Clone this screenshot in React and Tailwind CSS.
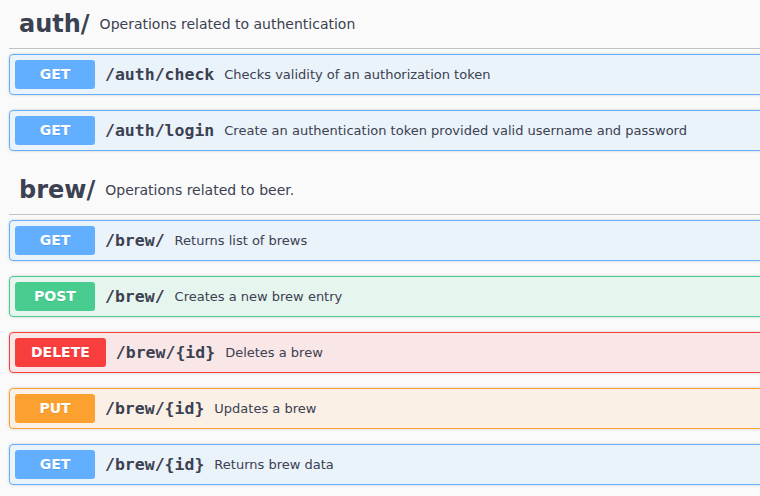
const sans = { fontFamily: '"DejaVu Sans", sans-serif' };

const METHODS = {
  get: { badge: 'bg-[#61affe]', block: 'bg-[#61affe]/10 border-[#61affe]' },
  post: { badge: 'bg-[#49cc90]', block: 'bg-[#49cc90]/10 border-[#49cc90]' },
  delete: { badge: 'bg-[#f93e3e]', block: 'bg-[#f93e3e]/10 border-[#f93e3e]' },
  put: { badge: 'bg-[#fca130]', block: 'bg-[#fca130]/10 border-[#fca130]' },
};

const sections = [
  {
    tag: 'auth/',
    desc: 'Operations related to authentication',
    ops: [
      { method: 'get', path: '/auth/check', desc: 'Checks validity of an authorization token' },
      { method: 'get', path: '/auth/login', desc: 'Create an authentication token provided valid username and password' },
    ],
  },
  {
    tag: 'brew/',
    desc: 'Operations related to beer.',
    ops: [
      { method: 'get', path: '/brew/', desc: 'Returns list of brews' },
      { method: 'post', path: '/brew/', desc: 'Creates a new brew entry' },
      { method: 'delete', path: '/brew/{id}', desc: 'Deletes a brew' },
      { method: 'put', path: '/brew/{id}', desc: 'Updates a brew' },
      { method: 'get', path: '/brew/{id}', desc: 'Returns brew data' },
    ],
  },
];

function Operation({ method, path, desc }) {
  const m = METHODS[method];
  return (
    <div className={`mb-[15px] rounded border shadow-[0_0_3px_rgba(0,0,0,0.19)] ${m.block}`}>
      <div className="flex items-center p-[5px]">
        <span
          className={`min-w-[80px] rounded-[3px] px-[16px] py-[6px] text-center text-[14px] leading-[17px] font-bold text-white [text-shadow:0_1px_0_rgba(0,0,0,0.1)] ${m.badge}`}
        >
          {method.toUpperCase()}
        </span>
        <span
          className="px-[10px] text-[16.5px] font-bold text-[#3b4151]"
          style={{ fontFamily: '"DejaVu Sans Mono", monospace' }}
        >
          {path}
        </span>
        <span className="text-[13px] text-[#3b4151]">{desc}</span>
      </div>
    </div>
  );
}

export default function App() {
  return (
    <div className="h-[496px] w-[760px] overflow-hidden bg-[#fafafa] leading-[normal]" style={sans}>
      <div className="w-[820px] pl-[9px]">
        {sections.map((s) => (
          <div key={s.tag} className="mb-px">
            <h4 className="mb-[5px] flex items-center border-b border-[#3b4151]/30 py-[10px] pl-[10px] pr-5 text-[24px] font-bold leading-[normal] text-[#3b4151]">
              <span>{s.tag}</span>
              <small className="px-[10px] text-[14px] font-normal leading-[normal]">{s.desc}</small>
            </h4>
            {s.ops.map((op, i) => (
              <Operation key={i} {...op} />
            ))}
          </div>
        ))}
      </div>
    </div>
  );
}
